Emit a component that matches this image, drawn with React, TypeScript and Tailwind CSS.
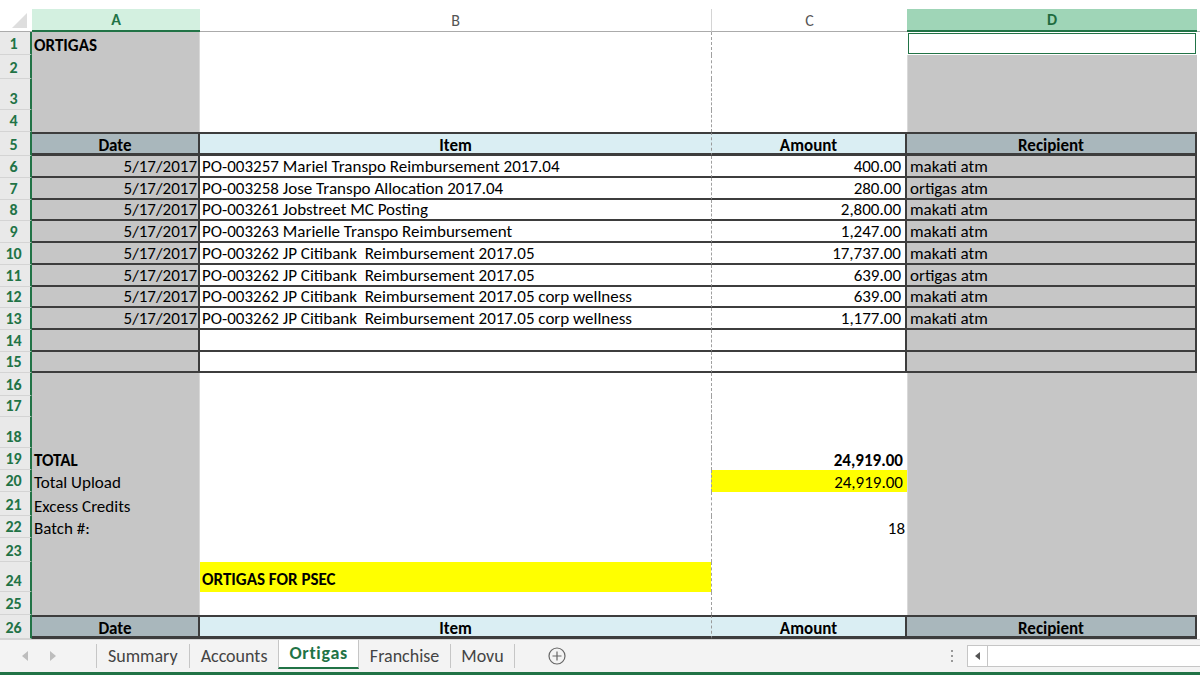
import type { ReactNode } from "react";

type Kind = "plain" | "head" | "data" | "box";

interface Row {
  n: number;
  h: string;
  kind: Kind;
  a?: ReactNode;
  b?: ReactNode;
  c?: ReactNode;
  d?: ReactNode;
  aBold?: boolean;
  cBold?: boolean;
  bYellow?: boolean;
  cYellow?: boolean;
  dActive?: boolean;
}

const items: [string, string, string][] = [
  ["PO-003257 Mariel Transpo Reimbursement 2017.04", "400.00", "makati atm"],
  ["PO-003258 Jose Transpo Allocation 2017.04", "280.00", "ortigas atm"],
  ["PO-003261 Jobstreet MC Posting", "2,800.00", "makati atm"],
  ["PO-003263 Marielle Transpo Reimbursement", "1,247.00", "makati atm"],
  ["PO-003262 JP Citibank  Reimbursement 2017.05", "17,737.00", "makati atm"],
  ["PO-003262 JP Citibank  Reimbursement 2017.05", "639.00", "ortigas atm"],
  ["PO-003262 JP Citibank  Reimbursement 2017.05 corp wellness", "639.00", "makati atm"],
  ["PO-003262 JP Citibank  Reimbursement 2017.05 corp wellness", "1,177.00", "makati atm"],
];

const dataHeights = ["h-[22px]", "h-[22px]", "h-[21px]", "h-[22px]", "h-[22px]", "h-[22px]", "h-[21px]", "h-[22px]"];

const rows: Row[] = [
  { n: 1, h: "h-[23px]", kind: "plain", a: "ORTIGAS", aBold: true, dActive: true },
  { n: 2, h: "h-[24px]", kind: "plain" },
  { n: 3, h: "h-[31px]", kind: "plain" },
  { n: 4, h: "h-[22px]", kind: "plain" },
  { n: 5, h: "h-[24px]", kind: "head" },
  ...items.map(([b, c, d], i) => ({
    n: 6 + i,
    h: dataHeights[i],
    kind: "data" as Kind,
    a: "5/17/2017",
    b,
    c,
    d,
  })),
  { n: 14, h: "h-[22px]", kind: "box" },
  { n: 15, h: "h-[21px]", kind: "box" },
  { n: 16, h: "h-[23px]", kind: "plain" },
  { n: 17, h: "h-[21px]", kind: "plain" },
  { n: 18, h: "h-[31px]", kind: "plain" },
  { n: 19, h: "h-[22px]", kind: "plain", a: "TOTAL", aBold: true, c: "24,919.00", cBold: true },
  { n: 20, h: "h-[22px]", kind: "plain", a: "Total Upload", c: "24,919.00", cYellow: true },
  { n: 21, h: "h-[24px]", kind: "plain", a: "Excess Credits" },
  { n: 22, h: "h-[22px]", kind: "plain", a: "Batch #:", c: "18" },
  { n: 23, h: "h-[24px]", kind: "plain" },
  { n: 24, h: "h-[30px]", kind: "plain", b: "ORTIGAS FOR PSEC", bYellow: true },
  { n: 25, h: "h-[23px]", kind: "plain" },
  { n: 26, h: "h-[24px]", kind: "head" },
];

const cell = "flex items-end overflow-hidden whitespace-pre";

function SheetRow({ r }: { r: Row }) {
  const ruled = r.kind === "data" || r.kind === "box";
  const rule = ruled ? "border-b-2 border-b-[#3d3d3d]" : "";

  if (r.kind === "head") {
    // table header row: Date / Item / Amount / Recipient
    const hb =
      "flex items-center justify-center pt-[3px] overflow-hidden border-t-2 border-b-[3px] border-t-[#3d3d3d] border-b-[#3d3d3d] font-bold";
    return (
      <div className={`flex ${r.h}`}>
        <RowNum n={r.n} />
        <div className={`${hb} w-[168px] bg-[#a9b7bc] border-r-2 border-r-[#3d3d3d]`}>Date</div>
        <div className={`${hb} w-[511px] bg-[#daeef3]`}>Item</div>
        <div
          className={`${hb} w-[196px] bg-[#daeef3] border-l border-l-[#9a9a9a] border-dashed border-r-2 border-r-[#3d3d3d]`}
          style={{ borderTopStyle: "solid", borderBottomStyle: "solid", borderRightStyle: "solid" }}
        >
          Amount
        </div>
        <div className={`${hb} w-[290px] bg-[#a9b7bc] border-r-2 border-r-[#3d3d3d]`}>Recipient</div>
      </div>
    );
  }

  return (
    <div className={`flex ${r.h}`}>
      <RowNum n={r.n} />
      <div
        className={`${cell} w-[168px] bg-[#c6c6c6] ${rule} ${
          ruled ? "border-r-2 border-r-[#3d3d3d] justify-end pr-[1px]" : "border-r border-r-[#d9d9d9] pl-[2px]"
        } ${r.aBold ? "font-bold" : ""}`}
      >
        {r.a}
      </div>
      <div
        className={`${cell} w-[511px] pl-[2px] ${rule} ${r.bYellow ? "bg-[#ffff00] font-bold pb-[3px]" : "bg-white"}`}
      >
        {r.b}
      </div>
      <div
        className={`${cell} w-[196px] justify-end border-l border-dashed border-l-[#a0a0a0] ${
          ruled ? "border-b-2 border-b-[#3d3d3d] border-r-2 border-r-[#3d3d3d]" : ""
        } ${r.cYellow ? "bg-[#ffff00]" : "bg-white"} ${r.cBold ? "font-bold" : ""} ${r.n === 22 ? "pr-[2px]" : "pr-[4px]"}`}
        style={ruled ? { borderBottomStyle: "solid", borderRightStyle: "solid" } : undefined}
      >
        {r.c}
      </div>
      {r.dActive ? (
        <div className="w-[290px] bg-white p-[1px]">
          <div className="h-full border border-[#217346] bg-white" />
        </div>
      ) : (
        <div
          className={`${cell} w-[290px] bg-[#c6c6c6] pl-[3px] ${rule} ${
            ruled ? "border-r-2 border-r-[#3d3d3d]" : "border-l border-l-[#d9d9d9]"
          }`}
        >
          {r.d}
        </div>
      )}
    </div>
  );
}

function RowNum({ n }: { n: number }) {
  return (
    <div className="w-[32px] shrink-0 flex items-end justify-center pb-[1px] pr-[3px] bg-[#e9e9e9] border-r-2 border-r-[#217346] border-b border-b-[#d4d4d4] text-[16px] font-bold text-[#217346]">
      {n}
    </div>
  );
}

function ColHeader() {
  return (
    <div className="flex h-[23px] text-[16px]">
      <div className="w-[32px] relative bg-white border-b border-b-[#ababab]">
        <svg className="absolute left-[12px] top-[4px]" width="16" height="16" viewBox="0 0 16 16">
          <polygon points="15,0 15,15 0,15" fill="#dedede" />
        </svg>
      </div>
      <div className="w-[168px] flex items-center justify-center bg-[#d3f0e0] border-b-2 border-b-[#217346] font-bold text-[#217346]">
        A
      </div>
      <div className="w-[511px] flex items-center justify-center bg-white border-b border-b-[#ababab] text-[#555]">
        B
      </div>
      <div className="w-[196px] flex items-center justify-center bg-white border-l border-l-[#d4d4d4] border-b border-b-[#ababab] text-[#555]">
        C
      </div>
      <div className="w-[290px] flex items-center justify-center bg-[#9fd5b7] border-b-2 border-b-[#217346] font-bold text-[#1e6b3f]">
        D
      </div>
      <div className="flex-1 border-b border-b-[#ababab]" />
    </div>
  );
}

function Sep() {
  return <div className="w-px h-[24px] bg-[#c6c6c6]" />;
}

function TabBar() {
  return (
    <div className="flex items-stretch h-[33px] bg-[#f3f3f3] border-t border-t-[#d4d4d4] text-[18px] text-[#444]">
      <div className="w-[96px] flex items-center gap-[22px] pl-[22px]">
        <svg width="6" height="10" viewBox="0 0 6 10">
          <polygon points="6,0 6,10 0,5" fill="#bdbdbd" />
        </svg>
        <svg width="6" height="10" viewBox="0 0 6 10">
          <polygon points="0,0 0,10 6,5" fill="#bdbdbd" />
        </svg>
      </div>
      <div className="flex items-center">
        <Sep />
        <div className="px-[11px]">Summary</div>
        <Sep />
        <div className="px-[11px]">Accounts</div>
      </div>
      <div className="flex items-center px-[10px] mb-[3px] bg-white border-x border-x-[#c6c6c6] border-b-2 border-b-[#217346] font-bold tracking-[0.7px] text-[#217346]">
        Ortigas
      </div>
      <div className="flex items-center">
        <div className="px-[11px]">Franchise</div>
        <Sep />
        <div className="px-[10px]">Movu</div>
        <Sep />
        <svg className="ml-[33px]" width="18" height="18" viewBox="0 0 18 18">
          <circle cx="9" cy="9" r="8" fill="none" stroke="#666" strokeWidth="1.2" />
          <path d="M9 4.5v9M4.5 9h9" stroke="#666" strokeWidth="1.2" />
        </svg>
      </div>
      <div className="flex-1" />
      <div className="flex items-center gap-[3px] flex-col justify-center mr-[14px]">
        <div className="w-[2px] h-[2px] bg-[#999]" />
        <div className="w-[2px] h-[2px] bg-[#999]" />
        <div className="w-[2px] h-[2px] bg-[#999]" />
      </div>
      <div className="w-[233px] my-[5px] flex bg-white border border-[#c6c6c6] border-r-0">
        <div className="w-[20px] flex items-center justify-center border-r border-r-[#c6c6c6]">
          <svg width="5" height="8" viewBox="0 0 5 8">
            <polygon points="5,0 5,8 0,4" fill="#555" />
          </svg>
        </div>
      </div>
    </div>
  );
}

export default function App() {
  return (
    <div className="w-[1200px] h-[675px] overflow-hidden bg-white text-black font-['Carlito','Lato','Liberation_Sans',sans-serif] text-[17px] leading-[19px]">
      <div className="h-[9px]" />
      <ColHeader />
      {rows.map((r) => (
        <SheetRow key={r.n} r={r} />
      ))}
      <TabBar />
      <div className="h-[3px] bg-[#217346]" />
    </div>
  );
}
